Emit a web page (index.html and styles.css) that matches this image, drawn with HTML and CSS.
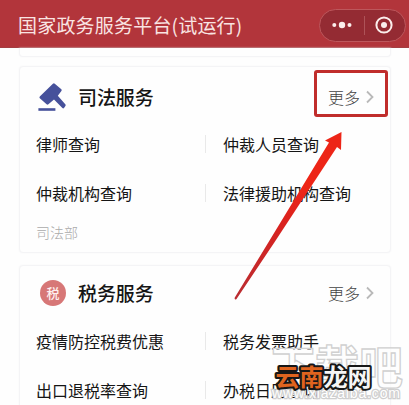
FILE: index.html
```
<!DOCTYPE html>
<html lang="zh-CN">
<head>
<meta charset="utf-8">
<title>国家政务服务平台</title>
<link rel="stylesheet" href="styles.css">
</head>
<body>
<div class="screen">
  <header class="bar">
    <h1>国家政务服务平台(试运行)</h1>
    <div class="capsule">
      <svg class="dots" width="20" height="8" viewBox="0 0 20 8"><circle cx="2.3" cy="4" r="2"/><circle cx="10" cy="4" r="3.2"/><circle cx="17.5" cy="4" r="2"/></svg>
      <span class="split"></span>
      <svg width="18" height="18" viewBox="0 0 18 18"><circle cx="9" cy="9" r="7.6" fill="none" stroke="#fbeeec" stroke-width="2"/><circle cx="9" cy="9" r="3" fill="#fbeeec"/></svg>
    </div>
  </header>
  <main>
    <section class="card previous"></section>
    <section class="card law">
      <div class="head">
        <svg class="icon" width="30" height="30" viewBox="0 0 30 30" fill="#46519b"><path d="M14.9 1.7Q15.9 .8 16.8 1.7L23.3 7.3Q24.2 8.1 23.4 9L19.8 13.8L27.5 22.6Q28 23.4 27.4 24.1L26 26Q25.2 26.8 24.4 26L16 17.6L10.4 22.3Q9.5 23 8.6 22.2L1.8 16.3Q1 15.5 1.8 14.6Z"/><rect x=".4" y="26.2" width="17" height="2.6"/></svg>
        <h2>司法服务</h2>
        <a class="more">更多<svg width="8" height="14" viewBox="0 0 8 14"><path d="M1 1.5L6.5 7L1 12.5"/></svg></a>
      </div>
      <div class="items">
        <span>律师查询</span><span>仲裁人员查询</span>
        <span>仲裁机构查询</span><span>法律援助机构查询</span>
      </div>
      <p class="source">司法部</p>
    </section>
    <section class="card tax">
      <div class="head">
        <span class="icon seal">税</span>
        <h2>税务服务</h2>
        <a class="more">更多<svg width="8" height="14" viewBox="0 0 8 14"><path d="M1 1.5L6.5 7L1 12.5"/></svg></a>
      </div>
      <div class="items">
        <span>疫情防控税费优惠</span><span>税务发票助手</span>
        <span>出口退税率查询</span><span>办税日历查询</span>
      </div>
    </section>
  </main>
  <div class="frame"></div>
  <svg class="overlay" width="409" height="405" viewBox="0 0 409 405">
    <defs><linearGradient id="red" x1="0" y1="1" x2="0" y2="0"><stop offset="0" stop-color="#b92d32"/><stop offset=".45" stop-color="#d9221f"/><stop offset=".65" stop-color="#ed2517"/></linearGradient></defs>
    <path fill="url(#red)" d="M341.5 132L325 140.5L329 142.5L268 243L234.5 298Q235 300.5 236.5 299L274 243L337 147L341 150Z"/>
    <g class="mark">
      <text class="big" x="271" y="384" textLength="132" lengthAdjust="spacingAndGlyphs">下载吧</text>
      <text class="url" x="272" y="398" textLength="128">www.xiazaiba.com</text>
    </g>
    <g class="brand">
      <text class="orange" x="275.5" y="386">云南</text>
      <text class="white" x="323.5" y="386">龙网</text>
    </g>
  </svg>
</div>
</body>
</html>
```
FILE: styles.css
```
* { box-sizing: border-box; }
body { margin: 0; font-family: "Noto Sans CJK SC", sans-serif; background: #fefefe; color: #151515; }
h1, h2, p { margin: 0; font-weight: 400; }
.screen { position: relative; width: 409px; height: 405px; overflow: hidden; }
.bar { height: 48px; padding: 3px 3px 0 18px; display: flex; align-items: center; justify-content: space-between; background: #b2353b; border-bottom: 1px solid #a33e42; }
.bar h1 { font-size: 19px; line-height: 28px; letter-spacing: .2px; color: #f9e4e2; font-weight: 400; white-space: nowrap; }
.capsule { width: 87px; height: 33px; border: 1px solid #bd575c; border-radius: 17px; background: #942b33; display: flex; align-items: center; padding: 0 12px; justify-content: space-between; }
.dots { fill: #fbeeec; }
.split { width: 1px; height: 19px; margin-left: 1px; background: #ae5358; }
main { padding: 0 18px 0 19px; }
.card { border: 1px solid #f4f4f6; border-radius: 4px; box-shadow: 0 0 2px #f5f5f7; background: #fefefe; padding: 0 16px; }
.previous { height: 9px; border-top: 0; border-radius: 0 0 4px 4px; }
.law { margin-top: 9px; height: 187px; }
.tax { margin-top: 12px; height: 170px; }
.head { height: 52px; padding: 8px 0 0 2px; display: flex; align-items: center; }
.tax .head { height: 50px; padding-top: 4px; }
.icon { width: 30px; height: 30px; flex: none; }
.head h2 { margin-left: 10px; font-size: 19px; font-weight: 500; line-height: 28px; letter-spacing: -.1px; }
.more { margin-left: auto; display: flex; align-items: center; gap: 6px; font-size: 16px; font-weight: 300; color: #444; }
.more svg { fill: none; stroke: #b9b9b9; stroke-width: 1.8; }
.items { display: grid; grid-template-columns: 187px 1fr; grid-auto-rows: 49px; align-items: center; font-size: 16px; white-space: nowrap; }
.items span:nth-child(odd) { background: linear-gradient(#e9e9e9, #e9e9e9) 169px center / 1px 18px no-repeat; }
.source { font-size: 14px; line-height: 20px; margin-top: 5px; color: #aaa; font-weight: 300; }
.seal { width: 26px; height: 26px; margin: 0 2px; border-radius: 50%; background: #d77777; color: #fff1f0; font-size: 13px; font-weight: 500; line-height: 26px; text-align: center; }
.frame { position: absolute; left: 314px; top: 70px; width: 74px; height: 47px; border: 3px solid #c02d2c; border-radius: 3px; }
.overlay { position: absolute; left: 0; top: 0; }
.mark text { fill: #fff; fill-opacity: .6; stroke: #d0d0d0; stroke-width: 1.3; font-weight: 700; }
.mark .big { font-size: 46px; }
.mark .url { font: 400 14px "Liberation Sans", sans-serif; stroke: #cfcfcf; stroke-width: 2.5; fill: #fff; fill-opacity: 1; paint-order: stroke; }
.brand text { font-size: 24px; font-weight: 700; stroke: #171717; stroke-width: 4px; stroke-linejoin: round; paint-order: stroke; }
.brand .orange { fill: #df641f; }
.brand .white { fill: #f5f5f5; }
```
